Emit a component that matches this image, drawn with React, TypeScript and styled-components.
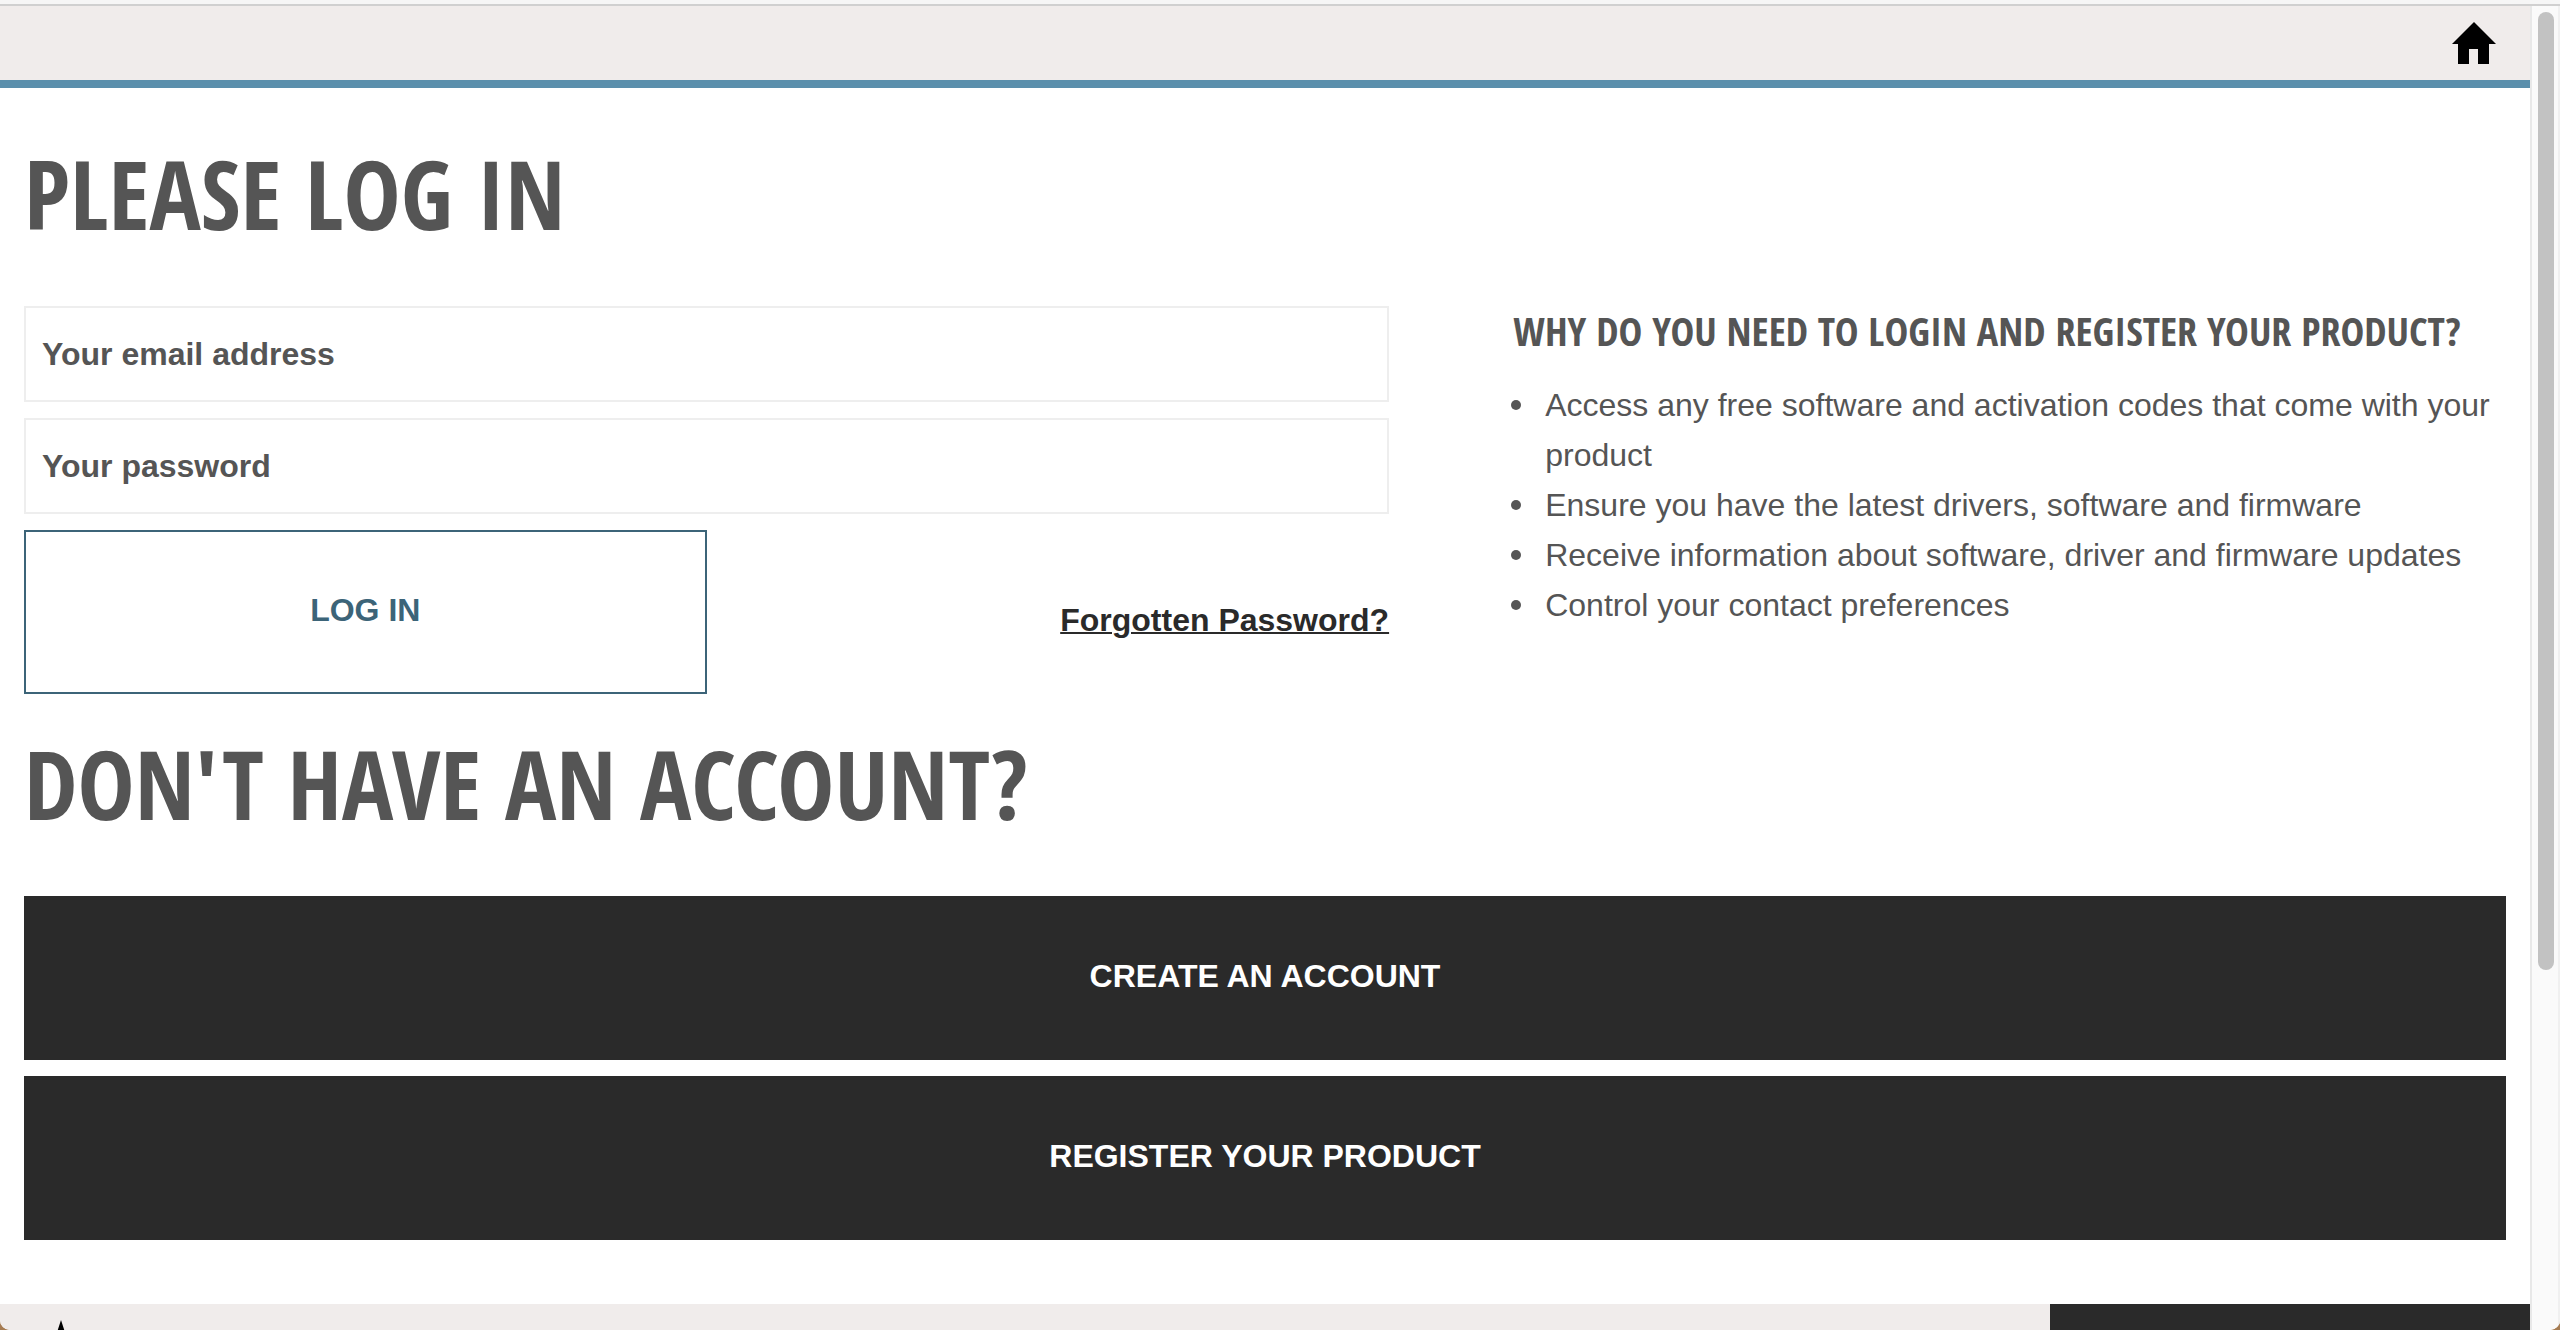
import React from 'react';
import styled, { createGlobalStyle } from 'styled-components';

const color = {
  text: '#555555',
  dark: '#2a2a2a',
  panel: '#f0eceb',
  accent: '#5b8fac',
  accentDeep: '#3c6478',
};

const display = '"Open Sans Condensed", "Roboto Condensed", sans-serif';
const body = 'Helvetica, "Liberation Sans", Arial, sans-serif';

const GlobalStyle = createGlobalStyle`
  *, *::before, *::after { box-sizing: border-box; }
  body {
    margin: 0;
    background: #a67c52;
    color: ${color.text};
    font: 32px/50px ${body};
  }
`;

const Frame = styled.div`
  display: flex;
  flex-direction: column;
  height: 100vh;
  overflow: hidden;
  background: #ffffff;
  border-radius: 0 0 10px 10px;
`;

const WindowEdge = styled.div`
  flex: none;
  height: 6px;
  background: #f6f6f6;
  border-bottom: 2px solid #d0d0d0;
`;

const Viewport = styled.div`
  display: flex;
  flex: 1;
  min-height: 0;
`;

const Page = styled.div`
  flex: 1;
  min-width: 0;
  overflow: hidden;
`;

const ScrollTrack = styled.div`
  flex: none;
  width: 30px;
  padding: 6px 4px 6px 6px;
  background: #fafafa;
  border-left: 2px solid #e8e8e8;
  border-right: 2px solid #f0f0f0;
`;

const ScrollThumb = styled.div`
  width: 16px;
  height: 73%;
  border-radius: 8px;
  background: #c2c2c2;
`;

const Header = styled.header`
  display: flex;
  justify-content: flex-end;
  align-items: center;
  height: 82px;
  padding: 0 32px;
  background: ${color.panel};
  border-bottom: 8px solid ${color.accent};
`;

const HomeLink = styled.a`
  display: flex;
  color: #000000;
`;

const Main = styled.main`
  padding: 16px 24px 64px;
`;

const Title = styled.h1`
  margin: 0;
  padding: 22px 0 46px;
  font: 700 96px/134px ${display};
  text-transform: uppercase;
`;

const Columns = styled.div`
  display: grid;
  grid-template-columns: 55% 40%;
  justify-content: space-between;
`;

const LoginForm = styled.form`
  display: grid;
  grid-template-columns: 1fr 1fr;
  row-gap: 16px;
`;

const Field = styled.input`
  grid-column: 1 / -1;
  width: 100%;
  height: 96px;
  padding: 0 16px;
  border: 2px solid #eeeeee;
  background: #ffffff;
  color: ${color.text};
  font: 700 32px/50px ${body};

  &::placeholder {
    color: ${color.text};
    opacity: 1;
  }
`;

const Button = styled.button<{ $outline?: boolean }>`
  width: 100%;
  height: 164px;
  padding: 0 0 4px;
  border: 2px solid ${p => (p.$outline ? color.accentDeep : color.dark)};
  background: ${p => (p.$outline ? '#ffffff' : color.dark)};
  color: ${p => (p.$outline ? color.accentDeep : '#ffffff')};
  font: 700 32px/50px ${body};
  text-transform: uppercase;
  cursor: pointer;
`;

const ForgottenLink = styled.a`
  align-self: center;
  justify-self: end;
  padding-top: 16px;
  color: ${color.dark};
  font-weight: 700;
  text-decoration-thickness: 2px;
`;

const SideTitle = styled.h2`
  margin: 0 0 24px;
  font: 700 40px/50px ${display};
  text-transform: uppercase;
`;

const Reasons = styled.ul`
  margin: 0 0 0 -2px;
  padding: 0;
  list-style: none;
`;

const Reason = styled.li`
  display: grid;
  grid-template-columns: 34px 1fr;

  &::before {
    content: '';
    width: 10px;
    height: 10px;
    margin-top: 20px;
    border-radius: 50%;
    background: ${color.text};
  }
`;

const Actions = styled.div`
  display: flex;
  flex-direction: column;
  gap: 16px;
`;

const Footer = styled.footer`
  display: flex;
  justify-content: space-between;
  height: 160px;
  background: ${color.panel};
`;

const FooterMark = styled.div`
  padding: 16px 32px;
`;

const FooterPanel = styled.div`
  width: 480px;
  background: ${color.dark};
`;

const reasons = [
  'Access any free software and activation codes that come with your product',
  'Ensure you have the latest drivers, software and firmware',
  'Receive information about software, driver and firmware updates',
  'Control your contact preferences',
];

function HomeIcon() {
  return (
    <svg width="48" height="44" viewBox="0 0 48 44" fill="currentColor" aria-hidden="true">
      <path d="M24 1 46 23H39V43H28V28H19V43H8V23H2Z" />
    </svg>
  );
}

function StarIcon() {
  return (
    <svg width="58" height="56" viewBox="0 0 58 56" aria-hidden="true">
      <path d="M29 0 35.5 20H56.6L39.5 32.4 46 52.5 29 40 12 52.5 18.5 32.4 1.4 20H22.5Z" />
    </svg>
  );
}

export default function App() {
  return (
    <>
      <GlobalStyle />
      <Frame>
        <WindowEdge />
        <Viewport>
          <Page>
            <Header>
              <HomeLink href="#" aria-label="Home">
                <HomeIcon />
              </HomeLink>
            </Header>
            <Main>
              <Title>Please log in</Title>
              <Columns>
                <LoginForm onSubmit={e => e.preventDefault()}>
                  <Field type="email" placeholder="Your email address" aria-label="Your email address" />
                  <Field type="password" placeholder="Your password" aria-label="Your password" />
                  <Button type="submit" $outline>
                    Log in
                  </Button>
                  <ForgottenLink href="#">Forgotten Password?</ForgottenLink>
                </LoginForm>
                <section>
                  <SideTitle>Why do you need to login and register your product?</SideTitle>
                  <Reasons>
                    {reasons.map(reason => (
                      <Reason key={reason}>{reason}</Reason>
                    ))}
                  </Reasons>
                </section>
              </Columns>
              <Title as="h2">Don't have an account?</Title>
              <Actions>
                <Button type="button">Create an account</Button>
                <Button type="button">Register your product</Button>
              </Actions>
            </Main>
            <Footer>
              <FooterMark>
                <StarIcon />
              </FooterMark>
              <FooterPanel />
            </Footer>
          </Page>
          <ScrollTrack>
            <ScrollThumb />
          </ScrollTrack>
        </Viewport>
      </Frame>
    </>
  );
}
